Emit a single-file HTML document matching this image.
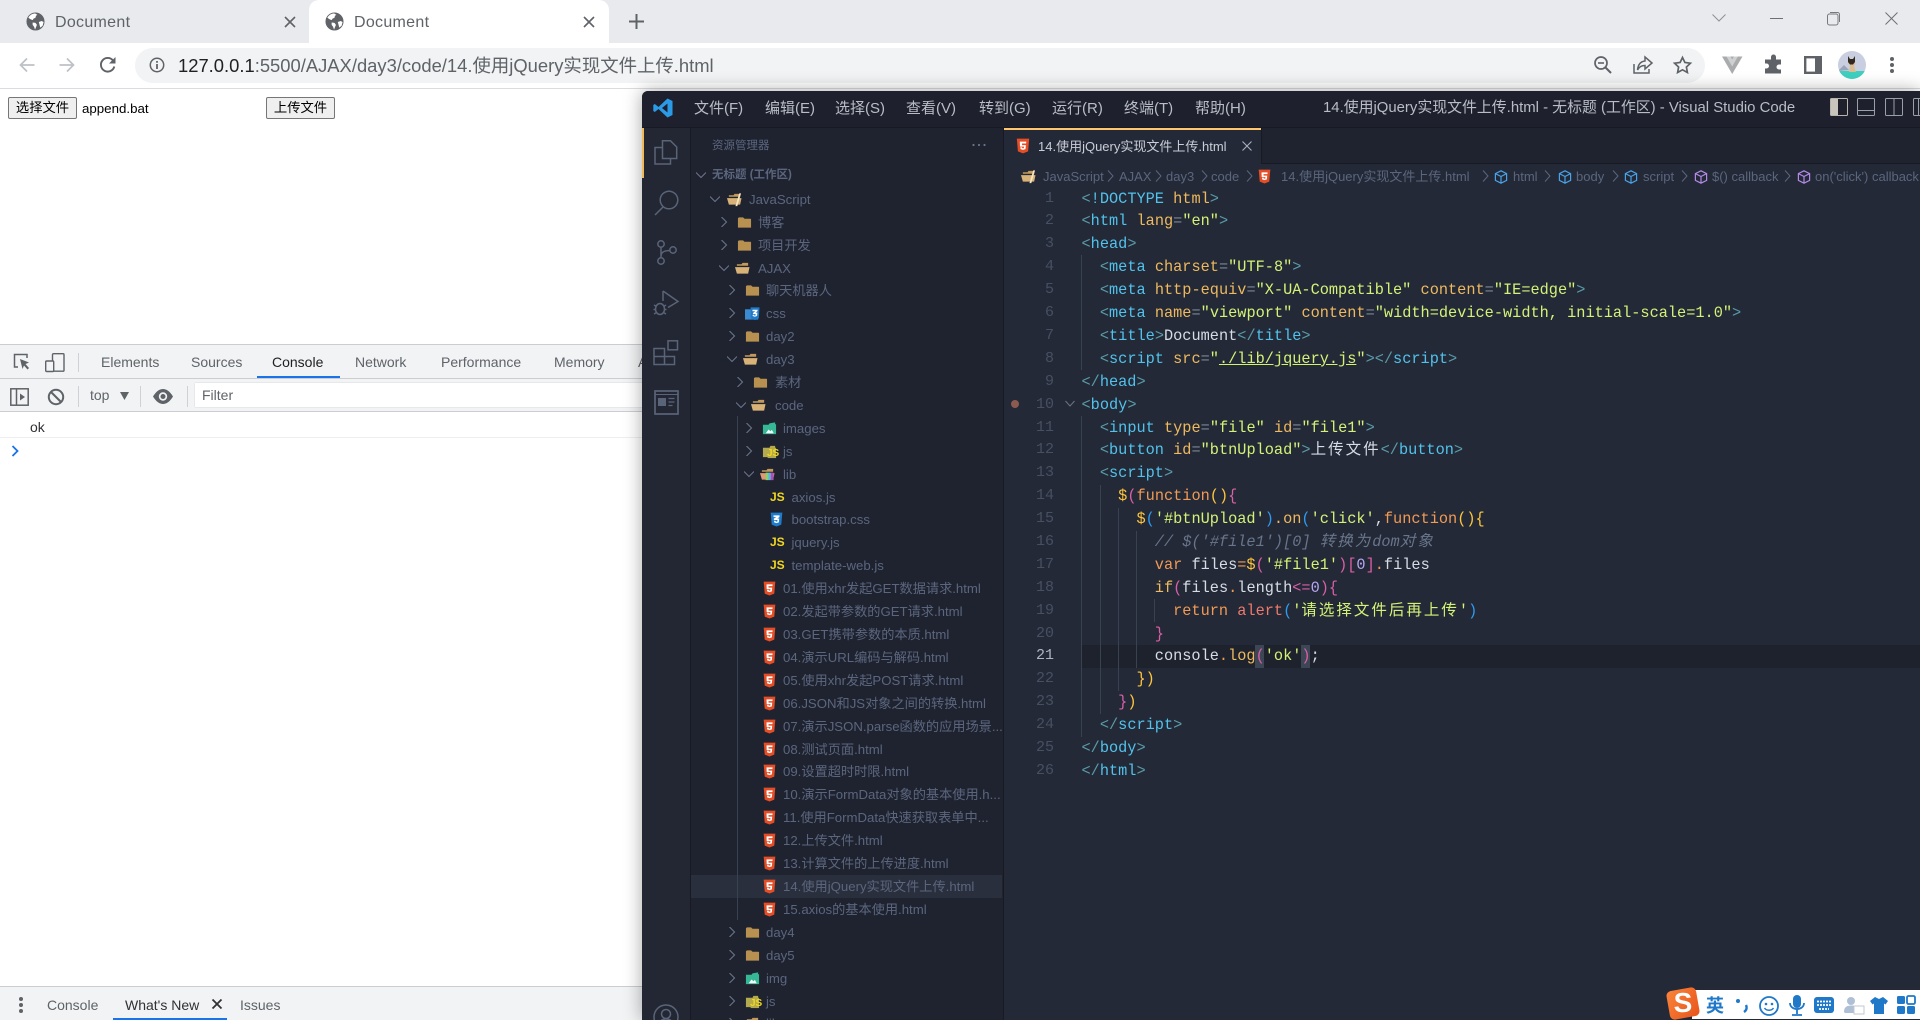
<!DOCTYPE html>
<html lang="zh">
<head>
<meta charset="utf-8">
<title>Document</title>
<style>
html,body{margin:0;padding:0;width:1920px;height:1020px;overflow:hidden;background:#fff;font-family:"Liberation Sans","Noto Sans CJK SC",sans-serif}
#root{position:relative;width:1920px;height:1020px;overflow:hidden}
.a{position:absolute}
.t{position:absolute;white-space:pre}
svg{position:absolute;overflow:visible}
#tree{position:absolute;left:691px;top:187.8px;width:312px;height:832px;overflow:hidden}
.r{position:relative;height:22.92px;line-height:23px;font-size:13.2px;color:#5b667e;white-space:pre}
.r span{position:absolute;top:0}
.r svg{top:4px;width:15px;height:15px}
.r svg.ch{width:10px;height:10px;top:6px}
.js{position:absolute;top:0;font:bold 12px/22px "Liberation Sans",sans-serif;color:#f1d81e}
#code{position:absolute;left:1081.5px;top:187.6px;width:830px;height:620px;overflow:hidden;font:15.27px/22.9px "Liberation Mono","Noto Sans CJK SC",monospace;color:#d6dde6}
#code div{height:22.9px;white-space:pre}
#ln{position:absolute;left:1030px;width:24px;top:187.6px;font:15px/22.9px "Liberation Mono",monospace;color:#475063;text-align:right}
#ln div{height:22.9px}
.z{font-family:"Noto Sans CJK SC",sans-serif;font-size:15.5px;letter-spacing:2px;line-height:0}
.b{color:#5a9aa8}.g{color:#52c2ec}.at{color:#eeb95f}.s{color:#d4f277}.e{color:#7b8696}.o{color:#f09a56}.y{color:#ffc53d}.p{color:#d95fa6}.u{color:#2f9bf0}.w{color:#d6dde6}.c{color:#68758a;font-style:italic}.r2{color:#ef7a6c}.v{color:#b9a7f5}
.m{position:absolute;top:99px;font-size:15px;line-height:20px;color:#b9bdc6;white-space:pre}
.bc{position:absolute;top:167px;font-size:13px;line-height:20px;color:#5b667e;white-space:pre}
.gd{position:absolute;width:1px;background:#3a4251}
.dt{position:absolute;font-size:14px;line-height:20px;color:#5f6368;white-space:pre}
.sep{position:absolute;width:1px;background:#cfd1d5}
.btn{position:absolute;box-sizing:border-box;height:22px;top:97px;background:#efefef;border:1px solid #767676;border-radius:2px;font-size:13.3px;line-height:20px;text-align:center;color:#000}
</style>
</head>
<body>
<div id="root">
<svg width="0" height="0" style="position:absolute">
<defs>
<symbol id="h5" viewBox="0 0 16 16"><path d="M1.8.6h12.4l-1.1 12.8L8 15.4l-5.1-2z" fill="#e44d26"/><path d="M4.8 3.6h6.5l-.2 1.9H6.9l.1 1.6h3.9l-.4 4L8 11.9l-2.5-.8-.1-1.8h1.7l.1.8.8.2.9-.2.1-1.5H5z" fill="#fff"/></symbol>
<symbol id="c3" viewBox="0 0 16 16"><path d="M1.8.6h12.4l-1.1 12.8L8 15.4l-5.1-2z" fill="#1f7ccb"/><path d="M4.8 3.6h6.5l-.2 1.9-2.3 1.4h2.1l-.4 4.1L8 11.9l-2.5-.8-.1-1.8h1.7l.1.8.8.2.9-.2.1-1.5H5.2l-.1-1.6 2.7-1.5H4.9z" fill="#fff"/></symbol>
<symbol id="fc" viewBox="0 0 16 16"><path d="M1 3.5l1-1h4.5l1.5 1.5h6.5l.5.5v9H1z" fill="#b8904f"/></symbol>
<symbol id="fo" viewBox="0 0 16 16"><path d="M2 5V3.5h5l1-1.5h6v3z" fill="#c39a5c"/><path d="M0 6.5h15.5L14 13.5H2z" fill="#d8b277"/></symbol>
<symbol id="fj" viewBox="0 0 16 16"><path d="M2 5V3.5h5l1-1.5h6v3z" fill="#c39a5c"/><path d="M0 6.5h15.5L14 13.5H2z" fill="#d8b277"/><path d="M13 1.5h2L11 15H9z" fill="#f5e6c0"/></symbol>
<symbol id="fi" viewBox="0 0 16 16"><path d="M1 4h6l1-1.5 6-1v2h1v10.5H1z" fill="#36b896"/><path d="M4 13l3-4 2 2 1.5-1.5 2 3.5z" fill="#fff"/></symbol>
<symbol id="fy" viewBox="0 0 16 16"><path d="M1 4h7l1-2h5v2h1v10H1z" fill="#b3a94e"/><path d="M6 9h9v6H6z" fill="#b3a94e"/></symbol>
<symbol id="fl" viewBox="0 0 16 16"><path d="M2 5V3.5h5l1-1.5h6v3z" fill="#c39a5c"/><path d="M0 6.5h15.5L14 13.5H2z" fill="#dd9a75"/><path d="M6 6h3v8H6z" fill="#8ccf6b"/><path d="M9 6h2.500v8H9z" fill="#54b6e8"/><path d="M11.500 6h3v8h-3z" fill="#a94fb5"/></symbol>
<symbol id="fb" viewBox="0 0 16 16"><path d="M0 3.500h14v11H0z" fill="#3a8bd0"/><path d="M6 1.500h9.500l-.8 11.700L10.500 15 6 13.200z" fill="#1f7ccb"/><path d="M8 4h5.500l-.2 1.500-2 1.500h1.900l-.3 3.500L10.500 11.500l-2.300-.8v-1.300h1.400l.1.600.7.200.9-.2.100-1.300H8.500V7.500l2.500-1.900H8z" fill="#fff"/></symbol>
<symbol id="cr" viewBox="0 0 10 10"><path d="M2.500 0l5 5-5 5" fill="none" stroke="#6b7488" stroke-width="1.100"/></symbol>
<symbol id="cd" viewBox="0 0 10 10"><path d="M0 2.500l5 5 5-5" fill="none" stroke="#6b7488" stroke-width="1.100"/></symbol>
<symbol id="crn" viewBox="0 0 7 12"><path d="M1 .5l5 5.500-5 5.500" fill="none" stroke="#5b667e" stroke-width="1"/></symbol>
<symbol id="cb" viewBox="0 0 14 14"><path d="M7 .8l5.600 2.800v6.800L7 13.200 1.400 10.400V3.600zM1.400 3.600L7 6.500l5.600-2.900M7 6.500v6.700" fill="none" stroke="#4aa3e8" stroke-width="1.200"/></symbol>
<symbol id="cp" viewBox="0 0 14 14"><path d="M7 .8l5.600 2.800v6.800L7 13.200 1.400 10.400V3.600zM1.400 3.600L7 6.500l5.600-2.900M7 6.500v6.700" fill="none" stroke="#b48ae8" stroke-width="1.200"/></symbol>
<symbol id="gl" viewBox="0 0 20 20"><circle cx="10" cy="10" r="9.500" fill="#5f6368"/><path d="M9.500 1.500C6 2 4 3.500 2.500 6l2 1.500 2.500 1 1-1.500 2-1 .5-2 1.500-1zM7 11l3 .5 1.500 2-1 2.500-1 2.500-1-3-1.500-2zM13.500 10.500l3-1 2 1-1 4-2.500 2z" fill="#fff"/></symbol>
</defs>
</svg>

<!-- chrome tabs -->
<div class="a" style="left:0;top:0;width:1920px;height:43px;background:#e8eaed"></div>
<div class="a" style="left:309px;top:0;width:300px;height:43px;background:#fff;border-radius:10px 10px 0 0"></div>
<svg style="left:26px;top:12px" width="19" height="19"><use href="#gl"/></svg>
<div class="t" style="left:55px;top:13px;font-size:16px;line-height:20px;color:#5f6368;letter-spacing:.3px">Document</div>
<svg style="left:284px;top:16px" width="12" height="12"><path d="M1 1l10 10M11 1L1 11" stroke="#5f6368" stroke-width="1.600"/></svg>
<svg style="left:325px;top:12px" width="19" height="19"><use href="#gl"/></svg>
<div class="t" style="left:354px;top:13px;font-size:16px;line-height:20px;color:#5f6368;letter-spacing:.3px">Document</div>
<svg style="left:583px;top:16px" width="12" height="12"><path d="M1 1l10 10M11 1L1 11" stroke="#5f6368" stroke-width="1.600"/></svg>
<svg style="left:629px;top:14px" width="15" height="15"><path d="M7.500 0v15M0 7.500h15" stroke="#5f6368" stroke-width="2"/></svg>
<!-- window controls -->
<svg style="left:1712px;top:14px" width="14" height="8"><path d="M.5.500L7 7l6.500-6.500" fill="none" stroke="#8e9095" stroke-width="1"/></svg>
<div class="a" style="left:1770px;top:18px;width:13px;height:1px;background:#6d6f73"></div>
<svg style="left:1827px;top:12px" width="13" height="14"><rect x=".5" y="2" width="10.500" height="11" rx="2" fill="none" stroke="#77797d"/><path d="M3 .5h7.500a2 2 0 0 1 2 2V10" fill="none" stroke="#77797d"/></svg>
<svg style="left:1885px;top:12px" width="13" height="13"><path d="M.5.500l12 12M12.500.500l-12 12" stroke="#6d6f73" stroke-width="1"/></svg>

<!-- toolbar -->
<div class="a" style="left:0;top:43px;width:1920px;height:45px;background:#fff"></div>
<div class="a" style="left:0;top:88px;width:1920px;height:1px;background:#dadce0"></div>
<svg style="left:19px;top:57px" width="16" height="16"><path d="M15.500 8H1.500M8 1.500L1.500 8 8 14.500" fill="none" stroke="#bdc1c6" stroke-width="1.700"/></svg>
<svg style="left:59px;top:57px" width="16" height="16"><path d="M.5 8h14M8 1.500L14.500 8 8 14.500" fill="none" stroke="#bdc1c6" stroke-width="1.700"/></svg>
<svg style="left:99px;top:56px" width="18" height="18"><path d="M15.300 10.500A6.800 6.800 0 1 1 14 4.500" fill="none" stroke="#5f6368" stroke-width="1.900"/><path d="M16.500 1v6.500H10z" fill="#5f6368"/></svg>
<div class="a" style="left:135px;top:48px;width:1570px;height:35px;background:#f1f3f4;border-radius:18px"></div>
<svg style="left:149px;top:57px" width="16" height="16"><circle cx="8" cy="8" r="6.700" fill="none" stroke="#5f6368" stroke-width="1.500"/><path d="M7.100 7h1.800v5H7.100zM7.100 4h1.800v1.800H7.100z" fill="#5f6368"/></svg>
<div class="t" style="left:178px;top:54px;font-size:18.4px;line-height:24px;color:#5f6368"><span style="color:#202124">127.0.0.1</span>:5500/AJAX/day3/code/14.使用jQuery实现文件上传.html</div>
<svg style="left:1594px;top:56px" width="18" height="18"><circle cx="7" cy="7" r="6" fill="none" stroke="#5f6368" stroke-width="1.700"/><path d="M11.500 11.500L17 17" stroke="#5f6368" stroke-width="2"/><path d="M4 7h6" stroke="#5f6368" stroke-width="1.600"/></svg>
<svg style="left:1633px;top:56px" width="20" height="18"><path d="M1 8v9h15v-4" fill="none" stroke="#5f6368" stroke-width="1.500"/><path d="M12 1l7 6-7 6V9.500C8 9.500 6 11 4.500 14c.5-5 3-8.500 7.500-9z" fill="none" stroke="#5f6368" stroke-width="1.500"/></svg>
<svg style="left:1673px;top:56px" width="19" height="18"><path d="M9.500 1.500l2.400 5 5.500.7-4 3.800 1 5.500-4.900-2.700-4.900 2.700 1-5.500-4-3.800 5.500-.7z" fill="none" stroke="#5f6368" stroke-width="1.700"/></svg>
<svg style="left:1722px;top:56px" width="21" height="18"><path d="M0 .500h20.500L10.200 18z" fill="#a9abad"/><path d="M4.500.500h4l1.700 3 1.700-3h4l-5.700 10z" fill="#cfd0d2"/></svg>
<svg style="left:1764px;top:56px" width="18" height="18"><path d="M7 1.500a2.500 2.500 0 0 1 5 0V4h5v5h-2a2.500 2.500 0 0 0 0 5h2v4H1v-5h1.500a2.500 2.500 0 0 0 0-5H1V4h6z" fill="#5f6368" transform="translate(0 -.5)"/></svg>
<svg style="left:1804px;top:56px" width="18" height="18"><rect x="1.200" y="1.200" width="15.600" height="15.600" fill="none" stroke="#5f6368" stroke-width="2.400"/><rect x="11" y="1" width="6" height="16" fill="#5f6368"/></svg>
<svg style="left:1838px;top:51px" width="28" height="28"><defs><clipPath id="av"><circle cx="14" cy="14" r="14"/></clipPath></defs><g clip-path="url(#av)"><rect width="28" height="28" fill="#c9cfe0"/><rect y="20" width="28" height="8" fill="#3fd0bf"/><path d="M0 20l6-6 5 5z" fill="#9aa3b8"/><path d="M10 7l1.500 2h4L17 7v6l-1 2 2 6h-7l1-7-2-2z" fill="#d9bd93"/><path d="M10 5l2 3h3l2-3v6l-2 2.500h-3L10 11z" fill="#33281f"/></g></svg>
<svg style="left:1889px;top:56px" width="6" height="18"><circle cx="3" cy="3" r="2" fill="#5f6368"/><circle cx="3" cy="9" r="2" fill="#5f6368"/><circle cx="3" cy="15" r="2" fill="#5f6368"/></svg>

<!-- page content -->
<div class="btn" style="left:8px;width:69px">选择文件</div>
<div class="t" style="left:82px;top:100px;font-size:13.300px;line-height:18px;color:#000">append.bat</div>
<div class="btn" style="left:266px;width:69px">上传文件</div>

<!-- devtools -->
<div class="a" style="left:0;top:344px;width:660px;height:1px;background:#cbcdd1"></div>
<div class="a" style="left:0;top:345px;width:660px;height:33px;background:#f1f3f4"></div>
<div class="a" style="left:0;top:378px;width:660px;height:1px;background:#cbcdd1"></div>
<div class="a" style="left:0;top:379px;width:660px;height:32px;background:#f1f3f4"></div>
<div class="a" style="left:0;top:411px;width:660px;height:1px;background:#cbcdd1"></div>
<div class="a" style="left:0;top:437px;width:660px;height:1px;background:#eceef0"></div>
<svg style="left:13px;top:353px" width="18" height="19"><path d="M5 14H1.500V1.500H14V5" fill="none" stroke="#5f6368" stroke-width="1.500"/><path d="M7 6l9 3.500-3.500 1.500 3.500 4-1.500 1.500-3.500-4-1.500 3.500z" fill="#5f6368"/></svg>
<svg style="left:45px;top:353px" width="20" height="19"><rect x="7.500" y=".7" width="11.500" height="17.500" rx="1" fill="none" stroke="#5f6368" stroke-width="1.400"/><rect x=".7" y="8" width="8" height="10.500" rx="1" fill="#f1f3f4" stroke="#5f6368" stroke-width="1.400"/></svg>
<div class="sep" style="left:78px;top:353px;height:19px"></div>
<div class="dt" style="left:101px;top:352px">Elements</div>
<div class="dt" style="left:191px;top:352px">Sources</div>
<div class="dt" style="left:272px;top:352px;color:#202124">Console</div>
<div class="a" style="left:257px;top:376px;width:83px;height:2px;background:#1a73e8"></div>
<div class="dt" style="left:355px;top:352px">Network</div>
<div class="dt" style="left:441px;top:352px">Performance</div>
<div class="dt" style="left:554px;top:352px">Memory</div>
<div class="dt" style="left:638px;top:352px">A</div>
<svg style="left:10px;top:388px" width="19" height="18"><rect x=".8" y=".8" width="17.400" height="16.400" fill="none" stroke="#5f6368" stroke-width="1.500"/><path d="M6.500 1v16" stroke="#5f6368" stroke-width="1.500"/><path d="M10 5.500l5 3.500-5 3.500z" fill="#5f6368"/></svg>
<svg style="left:47px;top:388px" width="18" height="18"><circle cx="9" cy="9" r="7.200" fill="none" stroke="#5f6368" stroke-width="2"/><path d="M4 4l10 10" stroke="#5f6368" stroke-width="2"/></svg>
<div class="sep" style="left:78px;top:386px;height:21px"></div>
<div class="dt" style="left:90px;top:385px">top</div>
<svg style="left:120px;top:392px" width="9" height="8"><path d="M0 0h9L4.500 8z" fill="#5f6368"/></svg>
<div class="sep" style="left:140px;top:386px;height:21px"></div>
<svg style="left:153px;top:389px" width="20" height="15"><path d="M0 7.500C3 2.500 6.500 0 10 0s7 2.500 10 7.500C17 12.500 13.500 15 10 15S3 12.500 0 7.500z" fill="#5f6368"/><circle cx="10" cy="7.500" r="4.200" fill="#f1f3f4"/><circle cx="10" cy="7.500" r="2.500" fill="#5f6368"/></svg>
<div class="sep" style="left:187px;top:386px;height:21px"></div>
<div class="a" style="left:195px;top:383px;width:465px;height:24px;background:#fff;box-shadow:0 0 1px #b9bcc0"></div>
<div class="dt" style="left:202px;top:385px;color:#5f6368">Filter</div>
<div class="t" style="left:30px;top:418px;font-size:14px;line-height:18px;color:#303134">ok</div>
<svg style="left:11px;top:445px" width="8" height="12"><path d="M1.500 1l5 5-5 5" fill="none" stroke="#1a73e8" stroke-width="1.800"/></svg>

<!-- drawer -->
<div class="a" style="left:0;top:986px;width:660px;height:1px;background:#cbcdd1"></div>
<div class="a" style="left:0;top:987px;width:660px;height:33px;background:#f1f3f4"></div>
<svg style="left:18px;top:996px" width="6" height="18"><circle cx="3" cy="3" r="2" fill="#5f6368"/><circle cx="3" cy="9" r="2" fill="#5f6368"/><circle cx="3" cy="15" r="2" fill="#5f6368"/></svg>
<div class="dt" style="left:47px;top:995px">Console</div>
<div class="dt" style="left:125px;top:995px;color:#303134">What's New</div>
<svg style="left:212px;top:999px" width="10" height="10"><path d="M.5.500l9 9M9.500.500l-9 9" stroke="#303134" stroke-width="1.800"/></svg>
<div class="dt" style="left:240px;top:995px">Issues</div>
<div class="a" style="left:113px;top:1018px;width:114px;height:2px;background:#1a73e8"></div>

<!-- VS Code -->
<div class="a" style="left:642px;top:91px;width:1278px;height:929px;background:#232936;border-radius:6px 0 0 0;box-shadow:0 0 18px rgba(0,0,0,.35)"></div>
<div class="a" style="left:642px;top:91px;width:1278px;height:36px;background:#1e212d;border-radius:6px 0 0 0"></div>
<div class="a" style="left:642px;top:127px;width:1278px;height:1px;background:#171a23"></div>
<div class="a" style="left:642px;top:128px;width:48px;height:892px;background:#232733"></div>
<div class="a" style="left:642px;top:128px;width:2px;height:50px;background:#f0b95c"></div>
<div class="a" style="left:690px;top:128px;width:1px;height:892px;background:#171a23"></div>
<div class="a" style="left:691px;top:128px;width:312px;height:892px;background:#1f2330"></div>
<div class="a" style="left:1003px;top:128px;width:1px;height:892px;background:#171a23"></div>
<div class="a" style="left:1004px;top:128px;width:916px;height:35px;background:#1f2330"></div>
<div class="a" style="left:1004px;top:163px;width:916px;height:1px;background:#171a23"></div>
<div class="a" style="left:1004px;top:128px;width:257px;height:36px;background:#232936"></div>
<div class="a" style="left:1004px;top:128px;width:257px;height:1.500px;background:#ffc66d"></div>
<div class="a" style="left:1261px;top:128px;width:1px;height:35px;background:#171a23"></div>

<!-- title bar -->
<svg style="left:653px;top:98px" width="20" height="20"><path d="M14.500 0.500L19.500 3v14l-5 2.500L5.500 11 1.800 14 .3 13V7L1.800 6l3.700 3zM14.500 5.500L9 10l5.500 4.500z" fill="#2b9be8" fill-rule="evenodd"/></svg>
<div class="m" style="left:694px">文件(F)</div>
<div class="m" style="left:765px">编辑(E)</div>
<div class="m" style="left:835px">选择(S)</div>
<div class="m" style="left:906px">查看(V)</div>
<div class="m" style="left:979px">转到(G)</div>
<div class="m" style="left:1052px">运行(R)</div>
<div class="m" style="left:1124px">终端(T)</div>
<div class="m" style="left:1195px">帮助(H)</div>
<div class="t" style="left:1323px;top:98px;font-size:14.9px;line-height:20px;color:#b9bdc6">14.使用jQuery实现文件上传.html - 无标题 (工作区) - Visual Studio Code</div>
<svg style="left:1830px;top:98px" width="18" height="18"><rect x=".5" y=".5" width="17" height="17" rx="1" fill="none" stroke="#b9b5ad"/><rect x="1" y="1" width="7" height="16" fill="#c9c5bd"/></svg>
<svg style="left:1857px;top:98px" width="18" height="18"><rect x=".5" y=".5" width="17" height="17" rx="1" fill="none" stroke="#9aa0aa"/><path d="M1 12.500h16" stroke="#9aa0aa"/></svg>
<svg style="left:1885px;top:98px" width="18" height="18"><rect x=".5" y=".5" width="17" height="17" rx="1" fill="none" stroke="#9aa0aa"/><path d="M9 1v16" stroke="#9aa0aa"/></svg>
<svg style="left:1913px;top:98px" width="18" height="18"><rect x=".5" y=".5" width="17" height="17" rx="1" fill="none" stroke="#9aa0aa"/><path d="M5.500 1v16" stroke="#9aa0aa"/></svg>

<!-- activity icons -->
<svg style="left:654px;top:140px" width="24" height="26" fill="none" stroke="#5a6478" stroke-width="1.500"><path d="M8.500.800h8L22.700 7v11.500H8.500z"/><path d="M8.500 7.500H1v16.500h15.500v-5.500"/></svg>
<svg style="left:654px;top:190px" width="25" height="26" fill="none" stroke="#5a6478" stroke-width="1.500"><circle cx="15" cy="10" r="8.800"/><path d="M9 17L1 25"/></svg>
<svg style="left:656px;top:240px" width="21" height="25" fill="none" stroke="#5a6478" stroke-width="1.500"><circle cx="5" cy="4" r="3.200"/><circle cx="5" cy="21" r="3.200"/><circle cx="17" cy="10" r="3.200"/><path d="M5 7.200v10.600M14 10.500c-5 0-9 1-9 6"/></svg>
<svg style="left:653px;top:290px" width="26" height="26" fill="none" stroke="#5a6478" stroke-width="1.500"><path d="M10 1l15 10.500-10 6"/><path d="M10 1v10"/><ellipse cx="7" cy="19" rx="4.500" ry="5.500"/><path d="M1 15l2.500 1.500M13 15l-2.500 1.500M.5 19.500h2M13.500 19.500h-2M1 24l2.500-1.500M13 24l-2.500-1.500"/></svg>
<svg style="left:653px;top:340px" width="26" height="26" fill="none" stroke="#5a6478" stroke-width="1.500"><rect x="15" y=".8" width="9.500" height="9"/><path d="M1 8.500h10.500v16H1zM1 16.500h20.500v8H11.500M11.500 8.500v8"/></svg>
<svg style="left:654px;top:390px" width="25" height="25"><rect x="1" y="1" width="23" height="23" fill="none" stroke="#5a6478" stroke-width="1.700"/><path d="M1 4.500h23" stroke="#5a6478" stroke-width="1"/><rect x="4" y="8" width="8" height="8" fill="#5a6478"/><path d="M14.500 8.500h6M14.500 12h6M14.500 15.500h4" stroke="#5a6478" stroke-width="1.200"/></svg>
<svg style="left:653px;top:1004px" width="26" height="26" fill="none" stroke="#5a6478" stroke-width="1.500"><circle cx="13" cy="13" r="12"/><circle cx="13" cy="10" r="4.500"/><path d="M5 22c1-5 4-7 8-7s7 2 8 7"/></svg>

<!-- explorer -->
<div class="t" style="left:712px;top:137px;font-size:11.500px;line-height:18px;color:#5b667e">资源管理器</div>
<svg style="left:972px;top:143px" width="14" height="4"><circle cx="1.500" cy="2" r="1.100" fill="#6b7488"/><circle cx="7" cy="2" r="1.100" fill="#6b7488"/><circle cx="12.500" cy="2" r="1.100" fill="#6b7488"/></svg>
<svg style="left:696px;top:170px" width="10" height="10"><use href="#cd"/></svg>
<div class="t" style="left:712px;top:166px;font-size:11.500px;line-height:18px;font-weight:bold;color:#5b667e">无标题 (工作区)</div>
<div class="a" style="left:691px;top:875px;width:311px;height:23px;background:#2a2f3d"></div>
<div class="a" style="left:737px;top:416px;width:1px;height:504px;background:#3a4251"></div>
<div id="tree"><div class="r"><svg class="ch" style="left:19px"><use href="#cd"/></svg><svg style="left:36px"><use href="#fj"/></svg><span style="left:58px">JavaScript</span></div>
<div class="r"><svg class="ch" style="left:28px"><use href="#cr"/></svg><svg style="left:46px"><use href="#fc"/></svg><span style="left:67px">博客</span></div>
<div class="r"><svg class="ch" style="left:28px"><use href="#cr"/></svg><svg style="left:46px"><use href="#fc"/></svg><span style="left:67px">项目开发</span></div>
<div class="r"><svg class="ch" style="left:28px"><use href="#cd"/></svg><svg style="left:44px"><use href="#fo"/></svg><span style="left:67px">AJAX</span></div>
<div class="r"><svg class="ch" style="left:36px"><use href="#cr"/></svg><svg style="left:54px"><use href="#fc"/></svg><span style="left:75px">聊天机器人</span></div>
<div class="r"><svg class="ch" style="left:36px"><use href="#cr"/></svg><svg style="left:54px"><use href="#fb"/></svg><span style="left:75px">css</span></div>
<div class="r"><svg class="ch" style="left:36px"><use href="#cr"/></svg><svg style="left:54px"><use href="#fc"/></svg><span style="left:75px">day2</span></div>
<div class="r"><svg class="ch" style="left:36px"><use href="#cd"/></svg><svg style="left:52px"><use href="#fo"/></svg><span style="left:75px">day3</span></div>
<div class="r"><svg class="ch" style="left:44px"><use href="#cr"/></svg><svg style="left:62px"><use href="#fc"/></svg><span style="left:84px">素材</span></div>
<div class="r"><svg class="ch" style="left:45px"><use href="#cd"/></svg><svg style="left:60px"><use href="#fo"/></svg><span style="left:84px">code</span></div>
<div class="r"><svg class="ch" style="left:53px"><use href="#cr"/></svg><svg style="left:71px"><use href="#fi"/></svg><span style="left:92px">images</span></div>
<div class="r"><svg class="ch" style="left:53px"><use href="#cr"/></svg><svg style="left:71px"><use href="#fy"/></svg><b class="js" style="left:76px;font-size:10px;top:3px">JS</b><span style="left:92px">js</span></div>
<div class="r"><svg class="ch" style="left:53px"><use href="#cd"/></svg><svg style="left:69px"><use href="#fl"/></svg><span style="left:92px">lib</span></div>
<div class="r"><b class="js" style="left:79px">JS</b><span style="left:100.500px">axios.js</span></div>
<div class="r"><svg style="left:78px"><use href="#c3"/></svg><span style="left:100.500px">bootstrap.css</span></div>
<div class="r"><b class="js" style="left:79px">JS</b><span style="left:100.500px">jquery.js</span></div>
<div class="r"><b class="js" style="left:79px">JS</b><span style="left:100.500px">template-web.js</span></div>
<div class="r"><svg style="left:71px"><use href="#h5"/></svg><span style="left:92px">01.使用xhr发起GET数据请求.html</span></div>
<div class="r"><svg style="left:71px"><use href="#h5"/></svg><span style="left:92px">02.发起带参数的GET请求.html</span></div>
<div class="r"><svg style="left:71px"><use href="#h5"/></svg><span style="left:92px">03.GET携带参数的本质.html</span></div>
<div class="r"><svg style="left:71px"><use href="#h5"/></svg><span style="left:92px">04.演示URL编码与解码.html</span></div>
<div class="r"><svg style="left:71px"><use href="#h5"/></svg><span style="left:92px">05.使用xhr发起POST请求.html</span></div>
<div class="r"><svg style="left:71px"><use href="#h5"/></svg><span style="left:92px">06.JSON和JS对象之间的转换.html</span></div>
<div class="r"><svg style="left:71px"><use href="#h5"/></svg><span style="left:92px">07.演示JSON.parse函数的应用场景...</span></div>
<div class="r"><svg style="left:71px"><use href="#h5"/></svg><span style="left:92px">08.测试页面.html</span></div>
<div class="r"><svg style="left:71px"><use href="#h5"/></svg><span style="left:92px">09.设置超时时限.html</span></div>
<div class="r"><svg style="left:71px"><use href="#h5"/></svg><span style="left:92px">10.演示FormData对象的基本使用.h...</span></div>
<div class="r"><svg style="left:71px"><use href="#h5"/></svg><span style="left:92px">11.使用FormData快速获取表单中...</span></div>
<div class="r"><svg style="left:71px"><use href="#h5"/></svg><span style="left:92px">12.上传文件.html</span></div>
<div class="r"><svg style="left:71px"><use href="#h5"/></svg><span style="left:92px">13.计算文件的上传进度.html</span></div>
<div class="r"><svg style="left:71px"><use href="#h5"/></svg><span style="left:92px">14.使用jQuery实现文件上传.html</span></div>
<div class="r"><svg style="left:71px"><use href="#h5"/></svg><span style="left:92px">15.axios的基本使用.html</span></div>
<div class="r"><svg class="ch" style="left:36px"><use href="#cr"/></svg><svg style="left:54px"><use href="#fc"/></svg><span style="left:75px">day4</span></div>
<div class="r"><svg class="ch" style="left:36px"><use href="#cr"/></svg><svg style="left:54px"><use href="#fc"/></svg><span style="left:75px">day5</span></div>
<div class="r"><svg class="ch" style="left:36px"><use href="#cr"/></svg><svg style="left:54px"><use href="#fi"/></svg><span style="left:75px">img</span></div>
<div class="r"><svg class="ch" style="left:36px"><use href="#cr"/></svg><svg style="left:54px"><use href="#fy"/></svg><b class="js" style="left:59px;font-size:10px;top:3px">JS</b><span style="left:75px">js</span></div>
<div class="r"><svg class="ch" style="left:36px"><use href="#cr"/></svg><svg style="left:54px"><use href="#fl"/></svg><span style="left:75px">lib</span></div></div>

<!-- editor tab -->
<svg style="left:1015px;top:138px" width="16" height="16"><use href="#h5"/></svg>
<div class="t" style="left:1038px;top:137px;font-size:13px;line-height:20px;color:#c9ced8">14.使用jQuery实现文件上传.html</div>
<svg style="left:1242px;top:141px" width="10" height="10"><path d="M.5.500l9 9M9.500.500l-9 9" stroke="#aab0bc" stroke-width="1.100"/></svg>

<!-- breadcrumbs -->
<svg style="left:1021px;top:169px" width="15" height="15"><use href="#fj"/></svg>
<div class="bc" style="left:1043px">JavaScript</div>
<div class="bc" style="left:1119px">AJAX</div>
<div class="bc" style="left:1166px">day3</div>
<div class="bc" style="left:1211px">code</div>
<svg style="left:1257px;top:169px" width="15" height="15"><use href="#h5"/></svg>
<div class="bc" style="left:1281px">14.使用jQuery实现文件上传.html</div>
<div class="bc" style="left:1513px">html</div>
<div class="bc" style="left:1576px">body</div>
<div class="bc" style="left:1643px">script</div>
<div class="bc" style="left:1712px">$() callback</div>
<div class="bc" style="left:1815px">on('click') callback</div>
<svg style="left:1106.500px;top:170px" width="7" height="12"><use href="#crn"/></svg>
<svg style="left:1154.500px;top:170px" width="7" height="12"><use href="#crn"/></svg>
<svg style="left:1200.500px;top:170px" width="7" height="12"><use href="#crn"/></svg>
<svg style="left:1245.500px;top:170px" width="7" height="12"><use href="#crn"/></svg>
<svg style="left:1481.500px;top:170px" width="7" height="12"><use href="#crn"/></svg>
<svg style="left:1544px;top:170px" width="7" height="12"><use href="#crn"/></svg>
<svg style="left:1611.500px;top:170px" width="7" height="12"><use href="#crn"/></svg>
<svg style="left:1680.500px;top:170px" width="7" height="12"><use href="#crn"/></svg>
<svg style="left:1784px;top:170px" width="7" height="12"><use href="#crn"/></svg>
<svg style="left:1494px;top:170px" width="14" height="14"><use href="#cb"/></svg>
<svg style="left:1558px;top:170px" width="14" height="14"><use href="#cb"/></svg>
<svg style="left:1624px;top:170px" width="14" height="14"><use href="#cb"/></svg>
<svg style="left:1694px;top:170px" width="14" height="14"><use href="#cp"/></svg>
<svg style="left:1797px;top:170px" width="14" height="14"><use href="#cp"/></svg>

<!-- editor -->
<div class="a" style="left:1081px;top:645px;width:839px;height:23px;background:#1d222d"></div>
<div class="a" style="left:1255px;top:645px;width:9px;height:23px;background:#3d4654"></div>
<div class="a" style="left:1301px;top:645px;width:9px;height:23px;background:#3d4654"></div>
<div class="gd" style="left:1081px;top:255px;height:115px"></div>
<div class="gd" style="left:1081px;top:416px;height:321px"></div>
<div class="gd" style="left:1100px;top:485px;height:229px"></div>
<div class="gd" style="left:1118px;top:508px;height:183px"></div>
<div class="gd" style="left:1136px;top:531px;height:137px"></div>
<div class="gd" style="left:1154px;top:599px;height:23px"></div>
<svg style="left:1011px;top:400px" width="8" height="8"><circle cx="4" cy="4" r="4" fill="#8a5b4e"/></svg>
<svg style="left:1065px;top:400px" width="10" height="8"><path d="M.5 1L5 6l4.500-5" fill="none" stroke="#6b7488" stroke-width="1"/></svg>
<div id="ln"><div>1</div><div>2</div><div>3</div><div>4</div><div>5</div><div>6</div><div>7</div><div>8</div><div>9</div><div>10</div><div>11</div><div>12</div><div>13</div><div>14</div><div>15</div><div>16</div><div>17</div><div>18</div><div>19</div><div>20</div><div style="color:#aeb5c2">21</div><div>22</div><div>23</div><div>24</div><div>25</div><div>26</div></div>
<div id="code">
<div><span class="b">&lt;</span><span class="g">!DOCTYPE</span> <span class="at">html</span><span class="b">&gt;</span></div>
<div><span class="b">&lt;</span><span class="g">html</span> <span class="at">lang</span><span class="e">=</span><span class="s">"en"</span><span class="b">&gt;</span></div>
<div><span class="b">&lt;</span><span class="g">head</span><span class="b">&gt;</span></div>
<div>  <span class="b">&lt;</span><span class="g">meta</span> <span class="at">charset</span><span class="e">=</span><span class="s">"UTF-8"</span><span class="b">&gt;</span></div>
<div>  <span class="b">&lt;</span><span class="g">meta</span> <span class="at">http-equiv</span><span class="e">=</span><span class="s">"X-UA-Compatible"</span> <span class="at">content</span><span class="e">=</span><span class="s">"IE=edge"</span><span class="b">&gt;</span></div>
<div>  <span class="b">&lt;</span><span class="g">meta</span> <span class="at">name</span><span class="e">=</span><span class="s">"viewport"</span> <span class="at">content</span><span class="e">=</span><span class="s">"width=device-width, initial-scale=1.0"</span><span class="b">&gt;</span></div>
<div>  <span class="b">&lt;</span><span class="g">title</span><span class="b">&gt;</span>Document<span class="b">&lt;/</span><span class="g">title</span><span class="b">&gt;</span></div>
<div>  <span class="b">&lt;</span><span class="g">script</span> <span class="at">src</span><span class="e">=</span><span class="s">"<u>./lib/jquery.js</u>"</span><span class="b">&gt;&lt;/</span><span class="g">script</span><span class="b">&gt;</span></div>
<div><span class="b">&lt;/</span><span class="g">head</span><span class="b">&gt;</span></div>
<div><span class="b">&lt;</span><span class="g">body</span><span class="b">&gt;</span></div>
<div>  <span class="b">&lt;</span><span class="g">input</span> <span class="at">type</span><span class="e">=</span><span class="s">"file"</span> <span class="at">id</span><span class="e">=</span><span class="s">"file1"</span><span class="b">&gt;</span></div>
<div>  <span class="b">&lt;</span><span class="g">button</span> <span class="at">id</span><span class="e">=</span><span class="s">"btnUpload"</span><span class="b">&gt;</span><span class="z">上传文件</span><span class="b">&lt;/</span><span class="g">button</span><span class="b">&gt;</span></div>
<div>  <span class="b">&lt;</span><span class="g">script</span><span class="b">&gt;</span></div>
<div>    <span class="y">$</span><span class="p">(</span><span class="o">function</span><span class="y">()</span><span class="p">{</span></div>
<div>      <span class="y">$</span><span class="u">(</span><span class="s">'#btnUpload'</span><span class="u">)</span><span class="at">.on</span><span class="u">(</span><span class="s">'click'</span><span class="w">,</span><span class="o">function</span><span class="y">()</span><span class="y">{</span></div>
<div>        <span class="c">// $('#file1')[0] <span class="z">转换为</span>dom<span class="z">对象</span></span></div>
<div>        <span class="o">var</span> files<span class="o">=</span><span class="y">$</span><span class="p">(</span><span class="s">'#file1'</span><span class="p">)</span><span class="p">[</span><span class="v">0</span><span class="p">]</span><span class="o">.</span>files</div>
<div>        <span class="at">if</span><span class="p">(</span>files<span class="o">.</span>length<span class="p">&lt;=</span><span class="v">0</span><span class="p">)</span><span class="p">{</span></div>
<div>          <span class="o">return</span> <span class="r2">alert</span><span class="u">(</span><span class="s">'<span class="z">请选择文件后再上传</span>'</span><span class="u">)</span></div>
<div>        <span class="p">}</span></div>
<div>        console<span class="o">.</span><span class="at">log</span><span class="p">(</span><span class="s">'ok'</span><span class="p">)</span>;</div>
<div>      <span class="y">})</span></div>
<div>    <span class="p">}</span><span class="y">)</span></div>
<div>  <span class="b">&lt;/</span><span class="g">script</span><span class="b">&gt;</span></div>
<div><span class="b">&lt;/</span><span class="g">body</span><span class="b">&gt;</span></div>
<div><span class="b">&lt;/</span><span class="g">html</span><span class="b">&gt;</span></div>
</div>

<!-- Sogou IME -->
<div class="a" style="left:1692px;top:990px;width:228px;height:29px;background:#fff"></div>
<div class="a" style="left:1668px;top:989px;width:30px;height:29px;background:linear-gradient(135deg,#f9843a,#e8541c);border-radius:5px;transform:rotate(-10deg)"></div>
<div class="t" style="left:1672px;top:986px;width:22px;text-align:center;font:900 28px/34px 'Liberation Sans',sans-serif;color:#fff">S</div>
<div class="t" style="left:1706px;top:994px;font:bold 18px/22px 'Noto Sans CJK SC',sans-serif;color:#1f78c8">英</div>
<svg style="left:1735px;top:998px" width="14" height="15"><circle cx="3" cy="3" r="2" fill="#1f78c8"/><path d="M11 7c1 2 1 5-2 7" fill="none" stroke="#1f78c8" stroke-width="2.500"/></svg>
<svg style="left:1759px;top:996px" width="20" height="20"><circle cx="10" cy="10" r="9" fill="none" stroke="#1f78c8" stroke-width="1.800"/><circle cx="7" cy="8" r="1.300" fill="#1f78c8"/><circle cx="13" cy="8" r="1.300" fill="#1f78c8"/><path d="M5.500 12c2 3 7 3 9 0" fill="none" stroke="#1f78c8" stroke-width="1.500"/></svg>
<svg style="left:1789px;top:995px" width="16" height="21"><rect x="4" y="0" width="8" height="13" rx="4" fill="#1f78c8"/><path d="M1 8c0 8 14 8 14 0M8 14v5M3 20h10" fill="none" stroke="#1f78c8" stroke-width="1.800"/></svg>
<svg style="left:1814px;top:997px" width="20" height="16"><rect width="20" height="16" rx="3" fill="#1f78c8"/><path d="M3 4.500h14M3 8h14M5 12h10" stroke="#fff" stroke-width="1.800" stroke-dasharray="2 1"/></svg>
<svg style="left:1844px;top:996px" width="20" height="19"><circle cx="7" cy="5" r="4" fill="#aebfd6"/><path d="M0 16c0-5 3-6.500 7-6.500s4 1 4 1V17H1z" fill="#aebfd6"/><rect x="10" y="10" width="10" height="8" fill="#fff" stroke="#c2c9d2"/></svg>
<svg style="left:1870px;top:997px" width="18" height="17"><path d="M5 0l4 2 4-2 5 4-2.500 3.500L14 6.500V17H4V6.500L2.500 7.500 0 4z" fill="#1f78c8"/></svg>
<svg style="left:1897px;top:996px" width="18" height="18"><rect width="8" height="8" rx="1.500" fill="#1f78c8"/><rect x="10" width="8" height="8" rx="1.500" fill="#fff" stroke="#1f78c8" stroke-width="1.800"/><rect y="10" width="8" height="8" rx="1.500" fill="#1f78c8"/><rect x="10" y="10" width="8" height="8" rx="1.500" fill="#1f78c8"/></svg>
</div>
</body>
</html>
